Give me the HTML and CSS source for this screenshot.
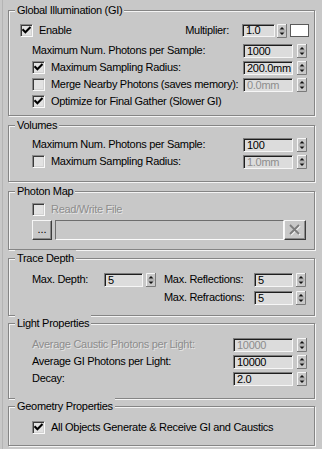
FILE: index.html
```html
<!DOCTYPE html>
<html>
<head>
<meta charset="utf-8">
<link rel="stylesheet" href="styles.css">
</head>
<body>
<div class="panel">

  <section class="group gi">
    <div class="title">Global Illumination (GI)</div>
    <div class="row flush">
      <span class="cb on"><svg viewBox="0 0 9 9"><polyline points="1.2,4 3.4,6.3 7.8,1.8"/></svg></span>
      <span class="lbl after-cb grow">Enable</span>
      <span class="lbl mult-lbl">Multiplier:</span>
      <span class="field mult">1.0</span>
      <svg class="spin tight" viewBox="0 0 10 14"><path class="sp-hi" d="M.5 13V.5H9"/><path class="sp-sh" d="M9.5 0V13.5H0"/><path class="sp-mid" d="M1.5 7H8.5"/><path class="sp-ar" d="M2.5 5.5 5 3 7.5 5.5Z"/><path class="sp-ar" d="M2.5 8.5 5 11 7.5 8.5Z"/></svg>
      <span class="swatch"></span>
    </div>
    <div class="row gap-above">
      <span class="lbl grow">Maximum Num. Photons per Sample:</span>
      <span class="field">1000</span>
      <svg class="spin" viewBox="0 0 10 14"><path class="sp-hi" d="M.5 13V.5H9"/><path class="sp-sh" d="M9.5 0V13.5H0"/><path class="sp-mid" d="M1.5 7H8.5"/><path class="sp-ar" d="M2.5 5.5 5 3 7.5 5.5Z"/><path class="sp-ar" d="M2.5 8.5 5 11 7.5 8.5Z"/></svg>
    </div>
    <div class="row">
      <span class="cb on"><svg viewBox="0 0 9 9"><polyline points="1.2,4 3.4,6.3 7.8,1.8"/></svg></span>
      <span class="lbl after-cb grow">Maximum Sampling Radius:</span>
      <span class="field">200.0mm</span>
      <svg class="spin" viewBox="0 0 10 14"><path class="sp-hi" d="M.5 13V.5H9"/><path class="sp-sh" d="M9.5 0V13.5H0"/><path class="sp-mid" d="M1.5 7H8.5"/><path class="sp-ar" d="M2.5 5.5 5 3 7.5 5.5Z"/><path class="sp-ar" d="M2.5 8.5 5 11 7.5 8.5Z"/></svg>
    </div>
    <div class="row">
      <span class="cb"></span>
      <span class="lbl after-cb grow">Merge Nearby Photons (saves memory):</span>
      <span class="field off">0.0mm</span>
      <svg class="spin" viewBox="0 0 10 14"><path class="sp-hi" d="M.5 13V.5H9"/><path class="sp-sh" d="M9.5 0V13.5H0"/><path class="sp-mid" d="M1.5 7H8.5"/><path class="sp-ar" d="M2.5 5.5 5 3 7.5 5.5Z"/><path class="sp-ar" d="M2.5 8.5 5 11 7.5 8.5Z"/></svg>
    </div>
    <div class="row">
      <span class="cb on"><svg viewBox="0 0 9 9"><polyline points="1.2,4 3.4,6.3 7.8,1.8"/></svg></span>
      <span class="lbl after-cb">Optimize for Final Gather (Slower GI)</span>
    </div>
  </section>

  <section class="group vol">
    <div class="title">Volumes</div>
    <div class="row">
      <span class="lbl grow">Maximum Num. Photons per Sample:</span>
      <span class="field">100</span>
      <svg class="spin" viewBox="0 0 10 14"><path class="sp-hi" d="M.5 13V.5H9"/><path class="sp-sh" d="M9.5 0V13.5H0"/><path class="sp-mid" d="M1.5 7H8.5"/><path class="sp-ar" d="M2.5 5.5 5 3 7.5 5.5Z"/><path class="sp-ar" d="M2.5 8.5 5 11 7.5 8.5Z"/></svg>
    </div>
    <div class="row">
      <span class="cb"></span>
      <span class="lbl after-cb grow">Maximum Sampling Radius:</span>
      <span class="field off">1.0mm</span>
      <svg class="spin" viewBox="0 0 10 14"><path class="sp-hi" d="M.5 13V.5H9"/><path class="sp-sh" d="M9.5 0V13.5H0"/><path class="sp-mid" d="M1.5 7H8.5"/><path class="sp-ar" d="M2.5 5.5 5 3 7.5 5.5Z"/><path class="sp-ar" d="M2.5 8.5 5 11 7.5 8.5Z"/></svg>
    </div>
  </section>

  <section class="group pmap">
    <div class="title">Photon Map</div>
    <div class="row">
      <span class="cb"></span>
      <span class="lbl after-cb dis">Read/Write File</span>
    </div>
    <div class="row file-row">
      <span class="btn dots">...</span>
      <span class="path"></span>
      <span class="btn xbtn"><svg viewBox="0 0 14 14"><path class="x-hi" d="M3 3 12 12M12 3 3 12"/><path class="x-lo" d="M2 2 11 11M11 2 2 11"/></svg></span>
    </div>
  </section>

  <section class="group trace">
    <div class="title">Trace Depth</div>
    <div class="trace-grid">
      <span class="lbl">Max. Depth:</span>
      <span class="field">5</span>
      <svg class="spin" viewBox="0 0 10 14"><path class="sp-hi" d="M.5 13V.5H9"/><path class="sp-sh" d="M9.5 0V13.5H0"/><path class="sp-mid" d="M1.5 7H8.5"/><path class="sp-ar" d="M2.5 5.5 5 3 7.5 5.5Z"/><path class="sp-ar" d="M2.5 8.5 5 11 7.5 8.5Z"/></svg>
      <span class="lbl lbl2">Max. Reflections:</span>
      <span class="field">5</span>
      <svg class="spin" viewBox="0 0 10 14"><path class="sp-hi" d="M.5 13V.5H9"/><path class="sp-sh" d="M9.5 0V13.5H0"/><path class="sp-mid" d="M1.5 7H8.5"/><path class="sp-ar" d="M2.5 5.5 5 3 7.5 5.5Z"/><path class="sp-ar" d="M2.5 8.5 5 11 7.5 8.5Z"/></svg>
      <span class="lbl lbl2 second">Max. Refractions:</span>
      <span class="field">5</span>
      <svg class="spin" viewBox="0 0 10 14"><path class="sp-hi" d="M.5 13V.5H9"/><path class="sp-sh" d="M9.5 0V13.5H0"/><path class="sp-mid" d="M1.5 7H8.5"/><path class="sp-ar" d="M2.5 5.5 5 3 7.5 5.5Z"/><path class="sp-ar" d="M2.5 8.5 5 11 7.5 8.5Z"/></svg>
    </div>
  </section>

  <section class="group light">
    <div class="title">Light Properties</div>
    <div class="row">
      <span class="lbl grow dis">Average Caustic Photons per Light:</span>
      <span class="field wide off">10000</span>
      <svg class="spin" viewBox="0 0 10 14"><path class="sp-hi" d="M.5 13V.5H9"/><path class="sp-sh" d="M9.5 0V13.5H0"/><path class="sp-mid" d="M1.5 7H8.5"/><path class="sp-ar" d="M2.5 5.5 5 3 7.5 5.5Z"/><path class="sp-ar" d="M2.5 8.5 5 11 7.5 8.5Z"/></svg>
    </div>
    <div class="row">
      <span class="lbl grow">Average GI Photons per Light:</span>
      <span class="field wide">10000</span>
      <svg class="spin" viewBox="0 0 10 14"><path class="sp-hi" d="M.5 13V.5H9"/><path class="sp-sh" d="M9.5 0V13.5H0"/><path class="sp-mid" d="M1.5 7H8.5"/><path class="sp-ar" d="M2.5 5.5 5 3 7.5 5.5Z"/><path class="sp-ar" d="M2.5 8.5 5 11 7.5 8.5Z"/></svg>
    </div>
    <div class="row">
      <span class="lbl grow">Decay:</span>
      <span class="field wide">2.0</span>
      <svg class="spin" viewBox="0 0 10 14"><path class="sp-hi" d="M.5 13V.5H9"/><path class="sp-sh" d="M9.5 0V13.5H0"/><path class="sp-mid" d="M1.5 7H8.5"/><path class="sp-ar" d="M2.5 5.5 5 3 7.5 5.5Z"/><path class="sp-ar" d="M2.5 8.5 5 11 7.5 8.5Z"/></svg>
    </div>
  </section>

  <section class="group geo">
    <div class="title">Geometry Properties</div>
    <div class="row">
      <span class="cb on"><svg viewBox="0 0 9 9"><polyline points="1.2,4 3.4,6.3 7.8,1.8"/></svg></span>
      <span class="lbl after-cb">All Objects Generate &amp; Receive GI and Caustics</span>
    </div>
  </section>

</div>
</body>
</html>
```

FILE: styles.css
```css
* { box-sizing: border-box; }

body {
  margin: 0;
  background: #c8c8c8;
  color: #000;
  font-family: "Liberation Sans", Arial, sans-serif;
  font-size: 11px;
  line-height: 17px;
  letter-spacing: -0.3px;
}

.panel {
  width: 316px;
  height: 449px;
  margin-left: 2px;
  border-left: 1px solid #b4b4b4;
  padding: 10px 3px 0 5px;
}

/* etched group box */
.group {
  position: relative;
  border: 1px solid #858585;
  box-shadow: inset 1px 1px 0 #f4f4f4, 1px 1px 0 #f4f4f4;
  padding: 0 7px 0 11px;
}

.title {
  position: absolute;
  top: -9px;
  left: 6px;
  padding: 0 2px;
  background: #c8c8c8;
  line-height: 17px;
  white-space: nowrap;
}

.gi    { padding-top: 11px; padding-bottom: 5px; }
.vol   { margin-top: 9px; padding-top: 10px; padding-bottom: 11px; }
.pmap  { margin-top: 9px; padding-top: 9px; padding-bottom: 9px; }
.trace { margin-top: 8px; padding-top: 12px; padding-bottom: 9px; }
.light { margin-top: 7px; padding-top: 12px; padding-bottom: 11px; }
.geo   { margin-top: 7px; padding-top: 12px; padding-bottom: 9px; }

.row {
  display: flex;
  align-items: center;
  height: 17px;
  padding-left: 12px;
}
.row.flush { padding-left: 0; }
.row.gap-above { margin-top: 3px; }

.lbl { white-space: nowrap; }
.grow { flex: 1; }
.after-cb { margin-left: 6px; }
.dis {
  color: #8d8d8d;
  text-shadow: 1px 1px 0 rgba(255, 255, 255, 0.55);
}
.mult-lbl { margin-right: 13px; }

/* checkbox */
.cb {
  flex: none;
  width: 13px;
  height: 13px;
  border: 1px solid;
  border-color: #8a8a8a #fafafa #fafafa #8a8a8a;
  box-shadow: inset 1px 1px 0 #3a3a3a, inset -1px -1px 0 #d2d2d2;
  background: #e2e2e2;
  padding: 1px;
}
.cb svg { display: block; width: 9px; height: 9px; }
.cb polyline {
  fill: none;
  stroke: #000;
  stroke-width: 2.1;
  stroke-linecap: square;
}

/* spinner field */
.field {
  flex: none;
  width: 50px;
  height: 14px;
  border: 1px solid;
  border-color: #7d7d7d #f6f6f6 #f6f6f6 #7d7d7d;
  box-shadow: inset 1px 1px 0 #1e1e1e;
  background: #dcdcdc;
  padding-left: 3px;
  line-height: 12px;
  white-space: nowrap;
  overflow: hidden;
}
.field.mult { width: 33px; height: 13px; line-height: 11px; }
.field.wide { width: 60px; }
.field.off { color: #8d8d8d; }

.spin {
  flex: none;
  display: block;
  width: 10px;
  height: 14px;
  margin-left: 4px;
}
.spin.tight { margin-left: 2px; }
.sp-hi { fill: none; stroke: #f6f6f6; }
.sp-sh { fill: none; stroke: #7a7a7a; }
.sp-mid { fill: none; stroke: #9a9a9a; }
.sp-ar { fill: #111; }

.swatch {
  flex: none;
  width: 19px;
  height: 13px;
  margin-left: 3px;
  margin-right: -2px;
  background: #fff;
  border: 1px solid #5a5a5a;
}

/* photon map file row */
.file-row { height: 20px; margin-top: 2px; }
.btn {
  flex: none;
  height: 20px;
  border: 1px solid;
  border-color: #f6f6f6 #3c3c3c #3c3c3c #f6f6f6;
  box-shadow: inset -1px -1px 0 #8a8a8a;
  background: #c8c8c8;
}
.dots {
  width: 20px;
  text-align: center;
  line-height: 17px;
  letter-spacing: 0;
}
.path {
  flex: 1;
  height: 20px;
  margin-left: 3px;
  border: 1px solid;
  border-color: #6e6e6e #fcfcfc #fcfcfc #6e6e6e;
  background: #c8c8c8;
}
.xbtn {
  width: 22px;
  margin-right: 1px;
  display: flex;
  align-items: center;
  justify-content: center;
}
.xbtn svg { width: 14px; height: 14px; display: block; }
.x-hi { stroke: #f2f2f2; stroke-width: 1.6; fill: none; }
.x-lo { stroke: #7c7c7c; stroke-width: 1.8; fill: none; }

/* trace depth grid */
.trace-grid {
  display: grid;
  grid-template-columns: 72px 39px 13px 98px 39px 13px;
  grid-auto-rows: 17px;
  row-gap: 1px;
  align-items: center;
  padding-left: 12px;
}
.trace-grid .field { width: 39px; }
.trace-grid .spin { margin-left: 3px; }
.lbl2 { padding-left: 8px; }
.lbl2.second { grid-column: 4; }
```
